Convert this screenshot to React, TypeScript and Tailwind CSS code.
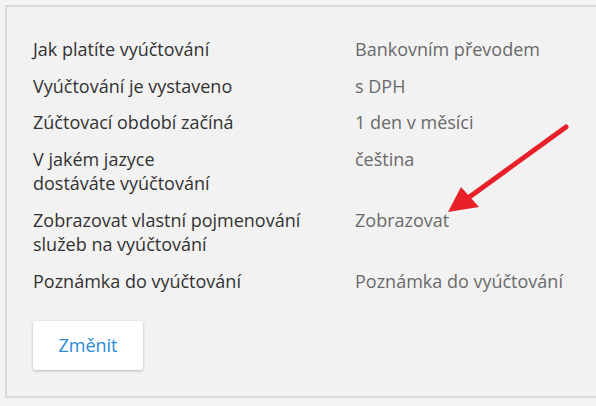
import React from "react";

const rows: { label: React.ReactNode; value: string }[] = [
  { label: "Jak platíte vyúčtování", value: "Bankovním převodem" },
  { label: "Vyúčtování je vystaveno", value: "s DPH" },
  { label: "Zúčtovací období začíná", value: "1 den v měsíci" },
  {
    label: (
      <>
        V jakém jazyce
        <br />
        dostáváte vyúčtování
      </>
    ),
    value: "čeština",
  },
  {
    label: (
      <>
        Zobrazovat vlastní pojmenování
        <br />
        služeb na vyúčtování
      </>
    ),
    value: "Zobrazovat",
  },
  { label: "Poznámka do vyúčtování", value: "Poznámka do vyúčtování" },
];

export default function App() {
  return (
    <div
      className="relative w-[596px] h-[406px] overflow-hidden bg-[#f3f3f3] pt-[5px] pl-[5px]"
      style={{ fontFamily: '"Open Sans", "Noto Sans", sans-serif' }}
    >
      <div className="w-[620px] h-[393px] border-2 border-[#dadada] bg-[#f2f2f2] pt-[30px] pl-[26px]">
        <div className="grid grid-cols-[322px_1fr] gap-y-3 text-[18px] leading-[24.5px]">
          {rows.map((row, i) => (
            <React.Fragment key={i}>
              <div className="text-[#333333]">{row.label}</div>
              <div className="text-[#6a6a6a]">{row.value}</div>
            </React.Fragment>
          ))}
        </div>
        <button className="mt-[28px] w-[110px] h-[49px] bg-white rounded-[3px] shadow-[0_1px_3px_rgba(0,0,0,0.25)] text-[18px] text-[#2b8ad6]">
          Změnit
        </button>
      </div>

      {/* red annotation arrow */}
      <svg className="absolute left-0 top-0 pointer-events-none" width="596" height="406">
        <line x1="566" y1="127" x2="468" y2="198" stroke="#e8202a" strokeWidth="5" strokeLinecap="round" />
        <polygon points="448,212 461,187 479,207" fill="#e8202a" />
      </svg>
    </div>
  );
}
